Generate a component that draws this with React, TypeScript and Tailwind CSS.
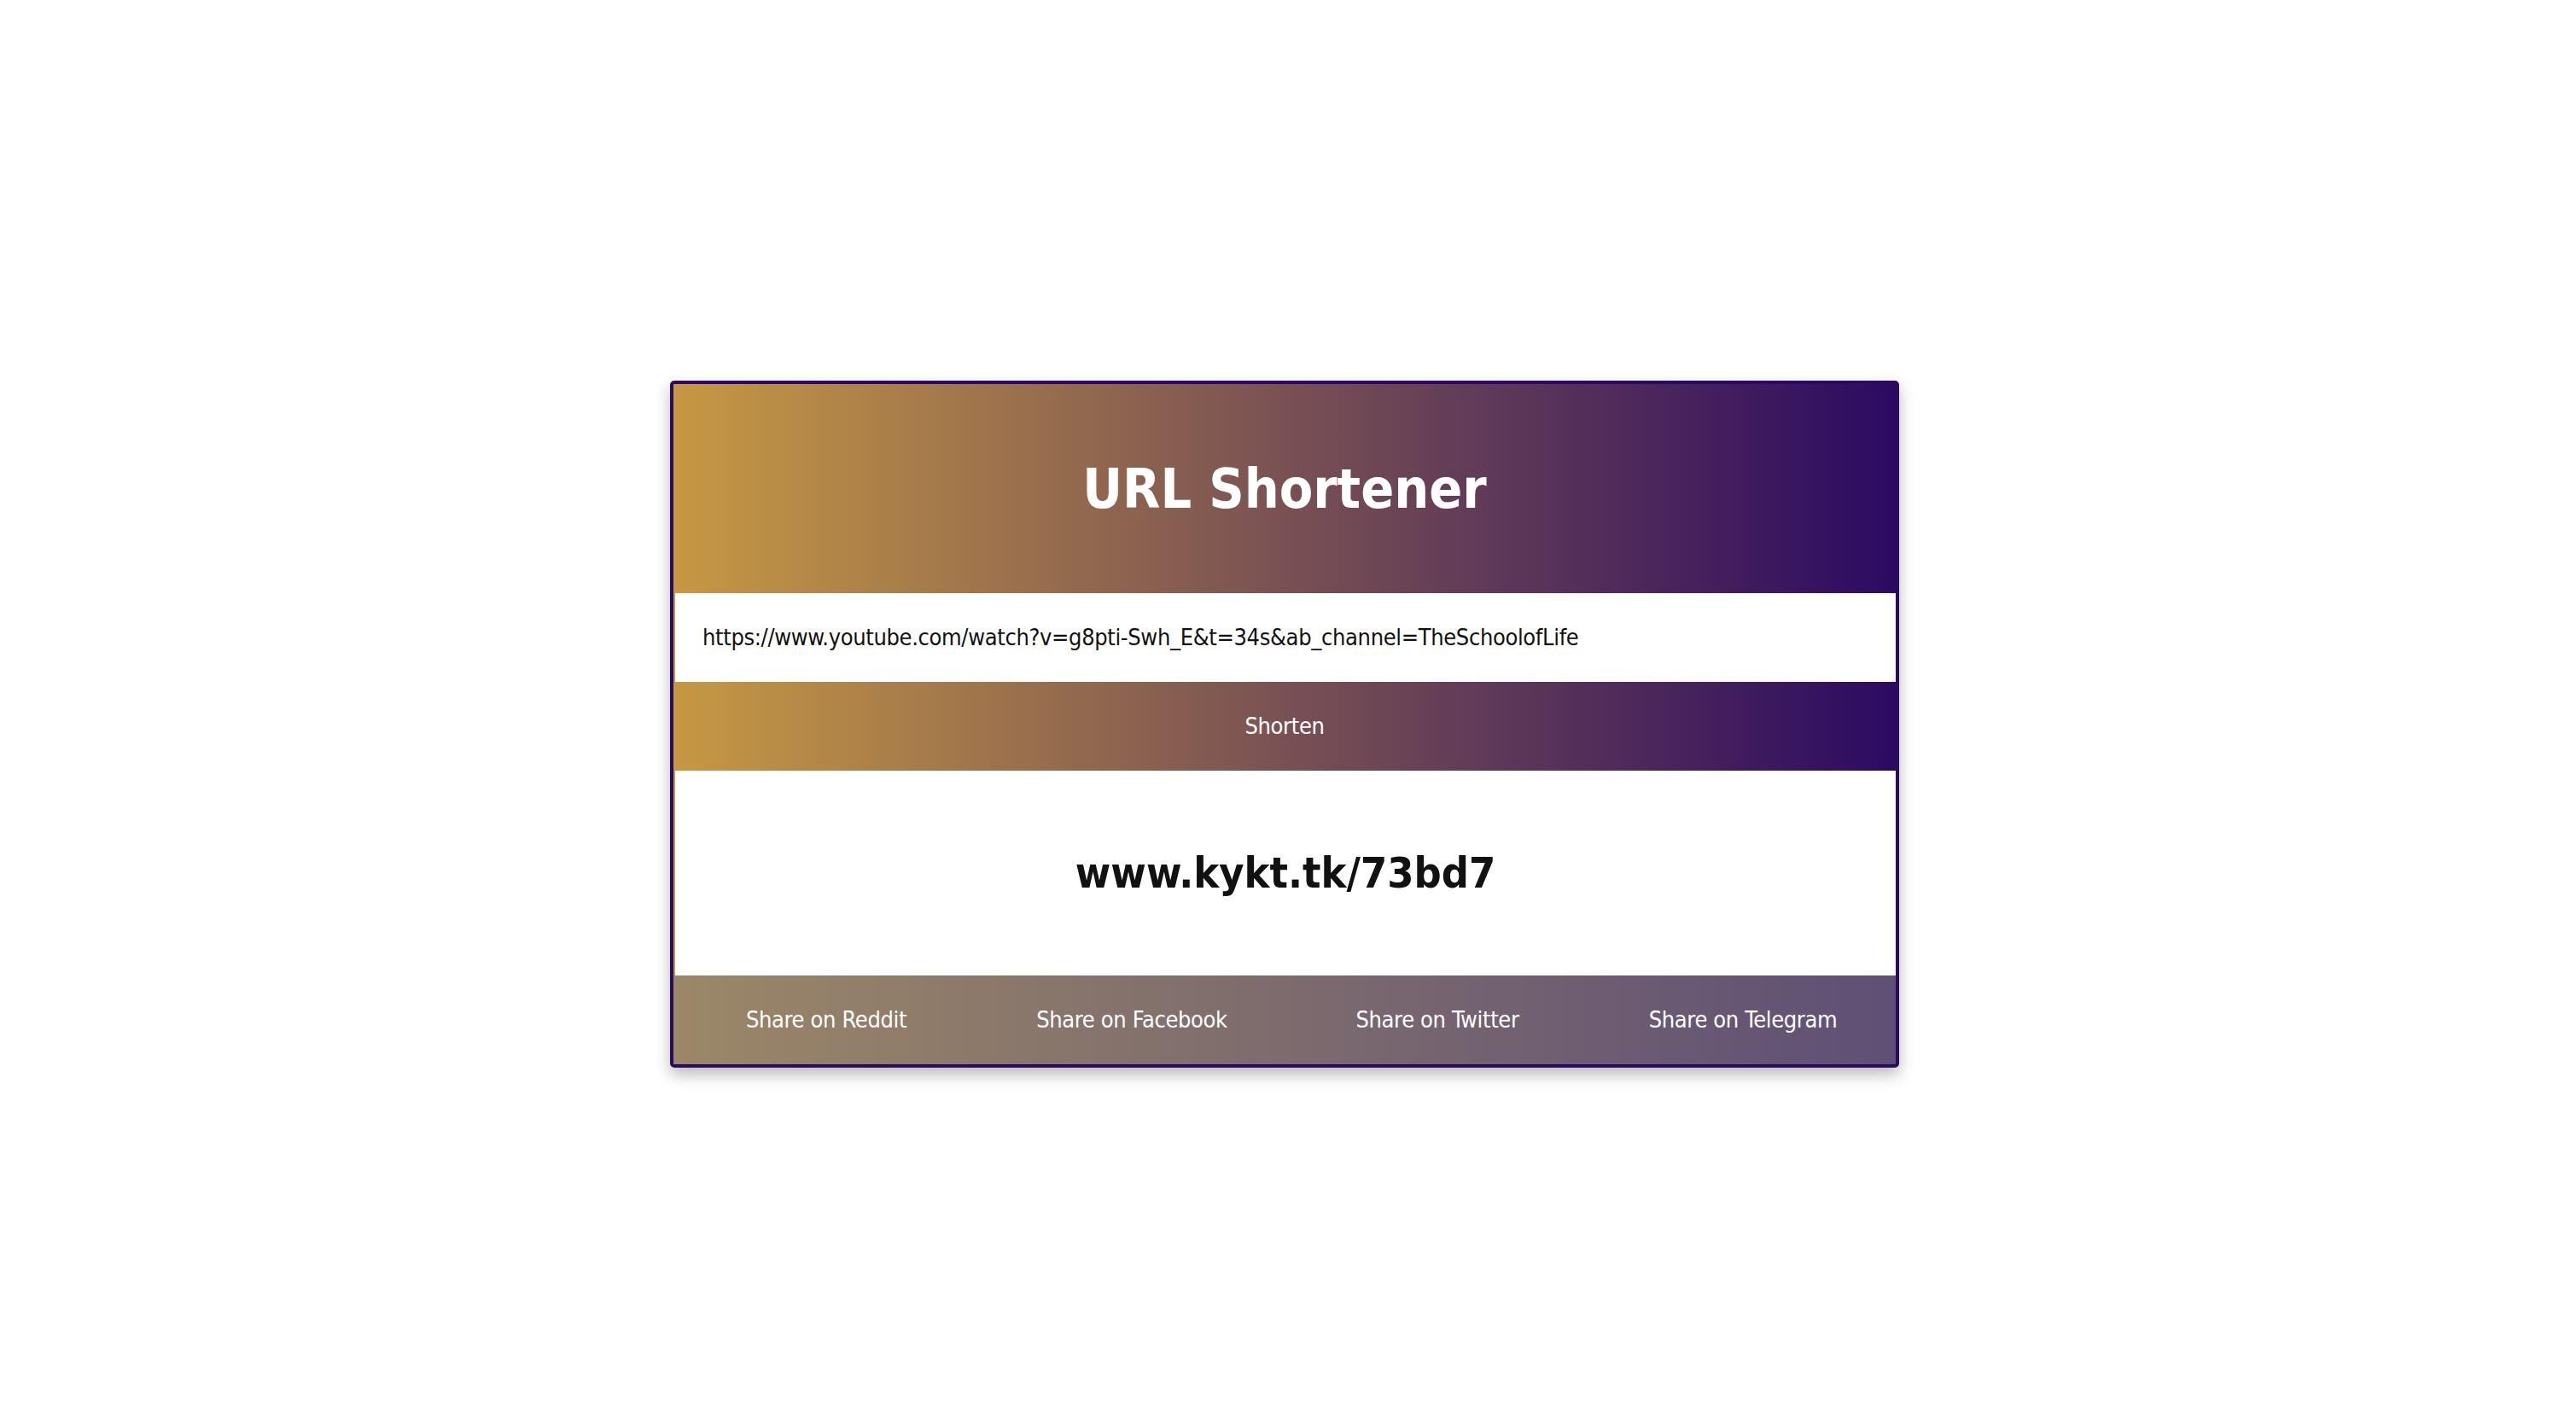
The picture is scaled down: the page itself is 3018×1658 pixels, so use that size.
import React from 'react';

const font = { fontFamily: '"DejaVu Sans Condensed", "DejaVu Sans", sans-serif' };

const shares = ['Share on Reddit', 'Share on Facebook', 'Share on Twitter', 'Share on Telegram'];

export default function App() {
  return (
    <div className="min-h-screen bg-white pt-[446px]" style={font}>
      <div className="ml-[785px] w-[1440px] overflow-hidden rounded-[5px] border-[4px] border-[#2c0a61] bg-[linear-gradient(to_right,#c69844,#2c0a62)] shadow-[0_8px_18px_rgba(0,0,0,0.28)]">
        <div className="flex h-[245px] items-center justify-center">
          <h1 className="text-[64px] font-bold text-white">URL Shortener</h1>
        </div>
        <div className="ml-[2px] flex h-[104px] items-center bg-white px-[32px] text-[27px] tracking-[-0.35px] text-[#111]">
          https://www.youtube.com/watch?v=g8pti-Swh_E&amp;t=34s&amp;ab_channel=TheSchoolofLife
        </div>
        <button type="button" className="flex h-[104px] w-full items-center justify-center text-[27px] tracking-[-0.35px] text-white">
          Shorten
        </button>
        <div className="ml-[2px] flex h-[240px] items-center justify-center bg-white text-[50px] font-bold text-[#111]">
          www.kykt.tk/73bd7
        </div>
        <div className="grid h-[104px] grid-cols-4 bg-[linear-gradient(to_right,#9b8767,#5f4f75)]">
          {shares.map((s) => (
            <a key={s} href="#" className="flex items-center justify-center text-[27px] tracking-[-0.35px] text-white">
              {s}
            </a>
          ))}
        </div>
      </div>
    </div>
  );
}
